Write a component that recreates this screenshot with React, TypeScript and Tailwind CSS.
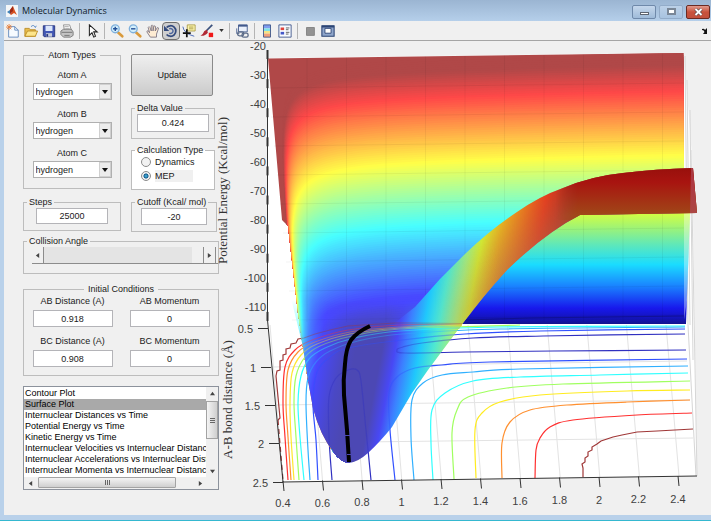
import type { ReactNode } from "react";

type Point = [number, number];

const PLOTS = [
  "Contour Plot",
  "Surface Plot",
  "Internuclear Distances vs Time",
  "Potential Energy vs Time",
  "Kinetic Energy vs Time",
  "Internuclear Velocities vs Internuclear Distance",
  "Internuclear Accelerations vs Internuclear Distance",
  "Internuclear Momenta vs Internuclear Distance",
];

/* ---------- surface geometry ---------- */

function interpolate(table: Point[], v: number): number {
  if (v <= table[0][0]) return table[0][1];
  for (let i = 1; i < table.length; i++) {
    if (v <= table[i][0]) {
      const [a, fa] = table[i - 1];
      const [b, fb] = table[i];
      return fa + ((fb - fa) * (v - a)) / (b - a);
    }
  }
  return table[table.length - 1][1];
}

const WALL_BASE: Point[] = [[58, 266], [140, 275], [222, 283], [313, 295], [370, 304], [463, 335]];
const RED: Point[] = [[54, 176], [60, 176], [86, 255], [150, 255], [212, 72], [320, 72]];
const GREEN: Point[] = [[54, 72], [86, 72], [150, 255], [212, 255], [282, 72], [320, 72]];
const BLUE: Point[] = [[54, 72], [150, 72], [212, 255], [288, 255], [316, 185]];

function wallColor(y: number): string {
  const c = [RED, GREEN, BLUE].map((t) => Math.round(interpolate(t, y)));
  return `rgb(${c[0]},${c[1]},${c[2]})`;
}

function wallBand(level: number): string {
  const pts: string[] = [`690,${level.toFixed(1)}`];
  for (let dy = 1.6; dy < 480 - level; dy *= 1.1) {
    const y = level + dy;
    const x = Math.min(688, interpolate(WALL_BASE, y) + 600 / dy + 6000 / (dy * dy));
    pts.push(`${x.toFixed(1)},${(y + (684 - x) * 0.012).toFixed(1)}`);
  }
  return `M${pts.join("L")}L${interpolate(WALL_BASE, 480) + 2},490L690,490Z`;
}

const LEVELS = Array.from({ length: 125 }, (_, i) => 48 + i * 2.2);

function smooth(points: Point[]): string {
  let d = `M${points[0][0]} ${points[0][1]}`;
  for (let i = 0; i < points.length - 1; i++) {
    const p0 = points[Math.max(0, i - 1)];
    const p1 = points[i];
    const p2 = points[i + 1];
    const p3 = points[Math.min(points.length - 1, i + 2)];
    const c1 = [p1[0] + (p2[0] - p0[0]) / 6, p1[1] + (p2[1] - p0[1]) / 6];
    const c2 = [p2[0] - (p3[0] - p1[0]) / 6, p2[1] - (p3[1] - p1[1]) / 6];
    d += `C${c1[0].toFixed(1)} ${c1[1].toFixed(1)} ${c2[0].toFixed(1)} ${c2[1].toFixed(1)} ${p2[0]} ${p2[1]}`;
  }
  return d;
}

const CONTOURS: { color: string; points: Point[] }[] = [
  { color: "#ff3030", points: [[535, 478], [536, 450], [540, 438], [550, 427], [573, 420], [637, 415], [692, 413]] },
  { color: "#ff9030", points: [[502, 478], [502, 443], [510, 422], [530, 410], [567, 405], [627, 402], [690, 400]] },
  { color: "#ffec20", points: [[476, 478], [475, 430], [482, 413], [500, 402], [540, 395], [627, 391], [690, 390]] },
  { color: "#a0ff60", points: [[454, 479], [452, 433], [457, 410], [468, 397], [507, 388], [563, 384], [690, 381]] },
  { color: "#30ffff", points: [[433, 480], [431, 443], [432, 410], [445, 393], [473, 381], [520, 377], [600, 375], [688, 373]] },
  { color: "#30b0ff", points: [[414, 480], [411, 437], [412, 400], [423, 383], [442, 375], [473, 372], [520, 369], [688, 366]] },
  { color: "#3050ff", points: [[395, 480], [390, 430], [389, 393], [397, 377], [415, 368], [442, 365], [490, 362], [687, 359]] },
  { color: "#3030c0", points: [[685, 334], [543, 336], [473, 338], [422, 343], [403, 347], [397, 350], [405, 353], [465, 352], [553, 351], [686, 350]] },
  { color: "#3030c0", points: [[332, 480], [329, 437], [329, 397], [336, 378], [348, 370], [357, 370], [361, 381], [366, 430], [371, 480]] },
  { color: "#ff3030", points: [[288, 480], [285, 437], [283, 403], [285, 367], [295, 350], [312, 340], [348, 330], [400, 325], [462, 324]] },
  { color: "#ff9030", points: [[291, 480], [288, 437], [286, 403], [288, 370], [298, 352], [315, 342], [350, 332], [400, 327], [462, 325]] },
  { color: "#ffe830", points: [[294, 480], [291, 437], [290, 403], [292, 373], [301, 355], [317, 344], [350, 334], [400, 328], [462, 325]] },
  { color: "#a0ff60", points: [[299, 480], [296, 437], [294, 403], [296, 376], [305, 357], [320, 346], [352, 336], [400, 329], [520, 325]] },
  { color: "#30ffff", points: [[304, 480], [300, 437], [298, 403], [301, 376], [309, 359], [325, 348], [354, 338], [400, 331], [500, 327], [685, 326]] },
  { color: "#30b0ff", points: [[310, 480], [308, 450], [306, 403], [308, 378], [316, 362], [330, 351], [358, 341], [402, 334], [500, 329], [685, 327]] },
  { color: "#3050ff", points: [[318, 480], [316, 440], [313, 403], [317, 372], [330, 357], [348, 348], [402, 340], [465, 334], [540, 331], [685, 329]] },
];

const FUNNEL =
  "M289 290L303 347Q307 378 313 408Q320 435 334 453Q341 462 349 463Q358 462 368 453Q380 442 392 427L412 393L428 370L463 323L490 290Z";
const RAMP =
  "M386 328L392 325L415 307L440 279L465 254Q490 230 517 212Q540 196 563 188Q592 176 623 173Q655 169 693 168L697 213L580 215Q545 233 507 270Q484 295 463 323L459 329Z";

const Z_LABELS = [-20, -30, -40, -50, -60, -70, -80, -90, -100, -110];
const X_LABELS = ["0.4", "0.6", "0.8", "1", "1.2", "1.4", "1.6", "1.8", "2", "2.2", "2.4"];
const Y_TICKS: { label: string; x: number; y: number }[] = [
  { label: "0.5", x: 268, y: 328 },
  { label: "1", x: 271, y: 367 },
  { label: "1.5", x: 275, y: 405 },
  { label: "2", x: 279, y: 443 },
  { label: "2.5", x: 283, y: 482 },
];

function ContourLines() {
  return (
    <g fill="none" strokeWidth="1.200">
      {CONTOURS.map((c, i) => (
        <path key={i} d={smooth(c.points)} stroke={c.color} />
      ))}
      <path
        stroke="#a03838"
        d="M583 477v-9l-1-4l3-2v-4l3-2v-4l4-2v-3l5-3l4-3l6-2l6-2l9-2l15-3l20-1l36-2"
      />
      <path
        stroke="#a03838"
        d="M470 323L395 323L348 326L330 330L315 334L304 338L298 339L296 343L291 344L290 348L286 349L286 354L283 355L283 360L280 361L280 370L277 371L276 376L278 397L280 418L278 420"
      />
      <path stroke="#a03838" strokeDasharray="5 4" d="M278 420L283 480" />
    </g>
  );
}

function SurfacePlot() {
  return (
    <svg viewBox="216 41 495 474" className="block h-auto w-full overflow-visible" fontFamily="'Liberation Sans', Arial, sans-serif">
      <title>Potential energy surface</title>
      <defs>
        <linearGradient id="valley" gradientUnits="userSpaceOnUse" x1="360" y1="0" x2="611" y2="47.7">
          <stop offset="0" stopColor="#48ffff" />
          <stop offset=".045" stopColor="#4890ff" />
          <stop offset=".1" stopColor="#4848ff" />
          <stop offset=".19" stopColor="#4a48c4" />
          <stop offset=".24" stopColor="#4c48b4" />
          <stop offset=".34" stopColor="#4c48b4" />
          <stop offset=".39" stopColor="#4848f4" />
          <stop offset=".43" stopColor="#3c80ff" />
          <stop offset=".485" stopColor="#20c8fc" />
          <stop offset=".54" stopColor="#50e8d0" />
          <stop offset=".6" stopColor="#a0f080" />
          <stop offset=".645" stopColor="#d4f430" />
          <stop offset=".71" stopColor="#ecb81c" />
          <stop offset=".78" stopColor="#f07c18" />
          <stop offset=".86" stopColor="#f03414" />
          <stop offset=".97" stopColor="#a01410" />
          <stop offset="1" stopColor="#a01410" />
        </linearGradient>
        <linearGradient id="shade" gradientUnits="userSpaceOnUse" x1="500" y1="210" x2="535" y2="253">
          <stop offset="0" stopColor="#b07050" stopOpacity="0" />
          <stop offset="1" stopColor="#b06c50" stopOpacity=".6" />
        </linearGradient>
        <linearGradient id="plateau" gradientUnits="userSpaceOnUse" x1="0" y1="168" x2="0" y2="215">
          <stop offset="0" stopColor="#98100c" />
          <stop offset=".3" stopColor="#a81410" />
          <stop offset="1" stopColor="#a04818" />
        </linearGradient>
        <linearGradient id="plateauFade" gradientUnits="userSpaceOnUse" x1="556" y1="0" x2="578" y2="0">
          <stop offset="0" stopColor="#000" />
          <stop offset="1" stopColor="#fff" />
        </linearGradient>
        <linearGradient id="shadeFade" gradientUnits="userSpaceOnUse" x1="435" y1="0" x2="500" y2="0">
          <stop offset="0" stopColor="#000" />
          <stop offset="1" stopColor="#fff" />
        </linearGradient>
        <linearGradient id="backWall" gradientUnits="userSpaceOnUse" x1="0" y1="213" x2="0" y2="325">
          <stop offset="0" stopColor="#d4ff40" />
          <stop offset=".12" stopColor="#a4f470" />
          <stop offset=".28" stopColor="#60e8b8" />
          <stop offset=".46" stopColor="#1adcff" />
          <stop offset=".65" stopColor="#1a84ff" />
          <stop offset=".85" stopColor="#1818ec" />
          <stop offset=".93" stopColor="#1414c0" />
          <stop offset="1" stopColor="#121288" />
        </linearGradient>
        <linearGradient id="fade" gradientUnits="userSpaceOnUse" x1="0" y1="300" x2="0" y2="350">
          <stop offset="0" stopColor="#000" />
          <stop offset="1" stopColor="#fff" />
        </linearGradient>
        <mask id="funnelMask" maskUnits="userSpaceOnUse" x="216" y="41" width="495" height="474">
          <rect x="216" y="41" width="495" height="474" fill="url(#fade)" />
          <path d="M384 326H500V480H384Z" fill="#fff" />
        </mask>
        <mask id="plateauMask" maskUnits="userSpaceOnUse" x="216" y="41" width="495" height="474">
          <rect x="216" y="41" width="495" height="474" fill="url(#plateauFade)" />
        </mask>
        <mask id="shadeMask" maskUnits="userSpaceOnUse" x="216" y="41" width="495" height="474">
          <rect x="216" y="41" width="495" height="474" fill="url(#shadeFade)" />
        </mask>
        <clipPath id="wallClip">
          <path d="M268 58.500L683.500 53V324H450L392 326L380 400L349 463Q341 462 334 453Q320 435 313 408Q307 378 303 347L298 313L288 226L282 220Z" />
        </clipPath>
        <clipPath id="funnelClip">
          <path d="M298 320L303 347Q307 378 313 408Q320 435 334 453Q341 462 349 463Q358 462 368 453Q380 442 392 427L412 393L428 370L463 323Z" />
        </clipPath>
        <clipPath id="rampClip">
          <path d={RAMP} />
        </clipPath>
      </defs>

      <path d="M268 58L684 53L692 157L697 476L283 482L268 322Z" fill="#fff" />

      <g stroke="#e3e3e3" fill="none">
        {X_LABELS.map((_, i) => (
          <path key={i} d={`M${270 + i * 39.6} 325L${283 + i * 39.6} ${482 - i * 0.6}`} />
        ))}
        <path d="M271 367L687 361M275 405L690 400M279 443L693 438" />
        <path d="M685 56L688 325L696 476M687 80L690 325M690 110L693 360M691 150L697 476" stroke="#d6d6d6" />
      </g>

      <ContourLines />

      <path d="M450 324L463 290L580 200L684 200L690 213L686 324Z" fill="url(#backWall)" />
      <path d="M684 213H690L687 300L684 320Z" fill="#fff" fillOpacity=".35" />

      <g clipPath="url(#wallClip)">
        <rect x="262" y="50" width="425" height="420" fill="#b04848" />
        {LEVELS.map((level) => (
          <path key={level} d={wallBand(level)} fill={wallColor(level)} />
        ))}
      </g>
      <path d="M463 323Q484 295 507 270Q545 233 580 215L684 213V324H462Z" fill="url(#backWall)" />
      <path d="M465 320L530 318L684 316" stroke="#101080" strokeOpacity=".7" fill="none" />

      <g stroke="#000" strokeOpacity=".05" fill="none">
        {X_LABELS.slice(1).map((_, i) => (
          <path key={i} d={`M${307 + i * 39.5} ${58 - i * 0.5}V322`} />
        ))}
        {Z_LABELS.slice(1).map((_, i) => (
          <path key={i} d={`M${268 + i * 3} ${88 + i * 29}L684 ${83 + i * 29}`} />
        ))}
      </g>

      <g mask="url(#funnelMask)">
        <path d={FUNNEL} fill="url(#valley)" />
      </g>
      <path d={RAMP} fill="url(#valley)" />
      <path d={RAMP} fill="url(#shade)" mask="url(#shadeMask)" />
      <g clipPath="url(#rampClip)">
        <rect x="550" y="160" width="150" height="60" fill="url(#plateau)" mask="url(#plateauMask)" />
        <path d="M691 168H693L697 213H690Z" fill="#b04858" fillOpacity=".7" />
      </g>

      <g clipPath="url(#funnelClip)" opacity=".4">
        <ContourLines />
      </g>
      <path
        d="M370 326Q357 332 351 340Q346 348 345 364Q343 380 344 395L347 430L349 462"
        fill="none"
        stroke="#000"
        strokeWidth="4"
      />
      <path d="M345 435.500H350M347 454.500H351" stroke="#4c48b4" />

      <g stroke="#333" fill="none">
        <path d="M267.500 50V320L283 482L697 476" />
        {Z_LABELS.map((_, i) => (
          <path key={i} d={`M267.500 ${50 + i * 29.100}v9`} strokeWidth="2" />
        ))}
        {Y_TICKS.map((t) => (
          <path key={t.label} d={`M${t.x - 10} ${t.y + 0.5}H${t.x}`} />
        ))}
        {X_LABELS.map((label, i) => (
          <path key={label} d={`M${283 + i * 39.5} ${481 - i * 0.5}l1 10`} />
        ))}
      </g>

      <g fill="#404040" fontSize="11">
        {Z_LABELS.map((v, i) => (
          <text key={v} x="266" y={50 + i * 29} textAnchor="end">{v}</text>
        ))}
        {Y_TICKS.map((t) => (
          <text key={t.label} x={t.x - 15} y={t.y + 5} textAnchor="end">{t.label}</text>
        ))}
        {X_LABELS.map((label, i) => (
          <text key={label} x={283 + i * 39.5} y={507 - Math.round(i * 0.4)} textAnchor="middle">{label}</text>
        ))}
      </g>
      <g fill="#333" fontFamily="'Liberation Serif', 'Times New Roman', serif" fontSize="13">
        <text transform="translate(227 264) rotate(-90)">Potential Energy (Kcal/mol)</text>
        <text transform="translate(232 459) rotate(-90)">A-B bond distance (Å)</text>
      </g>
    </svg>
  );
}

/* ---------- toolbar ---------- */

function Tool({ label, pressed, children }: { label: string; pressed?: boolean; children: ReactNode }) {
  return (
    <button
      type="button"
      aria-label={label}
      className={
        pressed
          ? "flex h-[18px] w-[18px] items-center justify-center rounded-sm border border-[#6f6f6f] bg-[#cfcfcf]"
          : "flex h-[18px] w-[18px] items-center justify-center"
      }
    >
      <svg viewBox="0 0 16 16" className="h-[14px] w-[14px] shrink-0" fill="none" aria-hidden="true">
        {children}
      </svg>
    </button>
  );
}

function Separator() {
  return <span className="mx-[3px] h-4 w-px bg-[#b4b4b4]" />;
}

function Magnifier({ plus }: { plus?: boolean }) {
  return (
    <>
      <path d="M9 9.500l5 4.500" stroke="#d99a3c" strokeWidth="3" strokeLinecap="round" />
      <circle cx="6" cy="5.500" r="4.500" fill="#d3eefb" stroke="#7fb0dc" strokeWidth="1.500" />
      <path d={plus ? "M3.500 5.500h5M6 3v5" : "M3.500 5.500h5"} stroke="#234f96" strokeWidth="1.600" />
    </>
  );
}

function Toolbar() {
  return (
    <div role="toolbar" className="flex h-5 items-center border-b border-[#a5a5a5] bg-[#f0f0f0]">
      <Tool label="New Figure">
        <path d="M3 3h7l4 4v8H3z" fill="#f6fbff" stroke="#5e86bb" />
        <path d="M10 3v4h4" stroke="#5e86bb" />
        <path d="M1 1l5 5M6 1L1 6M3.500 0v7M0 3.500h7" stroke="#e9803c" />
      </Tool>
      <Tool label="Open File">
        <path d="M1 14V5h5l1 1.500h6V14z" fill="#e8bd4c" stroke="#b98a22" />
        <path d="M1 14l3-6h11.500L13 14z" fill="#fde58a" stroke="#b98a22" />
        <path d="M8 3q3-3 5 1l1-2" stroke="#4c7fbf" />
      </Tool>
      <Tool label="Save Figure">
        <path d="M1.500 2h13v12.500h-12l-1-1z" fill="#4257b4" stroke="#26347c" />
        <path d="M4 2h8v6H4z" fill="#dbe6fb" />
        <path d="M4.500 10.500h7v4h-7z" fill="#c6ccdb" />
        <path d="M6 11.500v3" stroke="#26347c" strokeWidth="2" />
      </Tool>
      <Tool label="Print Figure">
        <path d="M5 7L4 1h7l2 6" fill="#fff" stroke="#8b8b8b" />
        <path d="M1 8l3-2h9l2 3v4l-3 2H4l-3-3z" fill="#c4c4c4" stroke="#777" />
        <path d="M2 9.500h12M5 13h6" stroke="#6e6e6e" />
        <path d="M5 3h5M6 5h5" stroke="#a6a6a6" />
      </Tool>
      <Separator />
      <Tool label="Edit Plot">
        <path d="M5 1v12l3-3 2 5 2-1-2-5h4z" fill="#fff" stroke="#222" strokeWidth="1.200" />
      </Tool>
      <Separator />
      <Tool label="Zoom In"><Magnifier plus /></Tool>
      <Tool label="Zoom Out"><Magnifier /></Tool>
      <Tool label="Pan">
        <path
          d="M5 15L1 9q0-2 2-1l1 2L2.500 4q1-2 2 0L6 8V2q1-2 2 0v6l1-5.500q1.500-1 2 .5L10.500 8 13 4q2 0 1 2l-2 5.500V15z"
          fill="#fdebd3"
          stroke="#7b7482"
        />
      </Tool>
      <Tool label="Rotate 3D" pressed>
        <path d="M3 12a6 6 0 1 0 0-8" stroke="#334a7d" strokeWidth="2" />
        <path d="M0 2v6h6z" fill="#334a7d" />
        <path d="M6 10.500a3 2.800 0 1 0 0-5" stroke="#4b659e" strokeWidth="1.600" />
      </Tool>
      <Tool label="Data Cursor">
        <path d="M6 1h9v7H6z" fill="#fbf3ac" stroke="#a99b49" />
        <path d="M8 3.500h5M8 5.500h5" stroke="#a99b49" />
        <path d="M1 3q1 8 13 11" stroke="#3d5fb5" />
        <path d="M1 10.500h9M5.500 6v9" stroke="#111" strokeWidth="2" />
      </Tool>
      <Tool label="Brush">
        <path d="M14 1L7 8" stroke="#3c527d" strokeWidth="2" />
        <path d="M8 6.500L5 8q-1 3-4.500 5.500Q6 14 9 10z" fill="#b02a35" />
        <path d="M10 10h5v5h-5z" fill="#f01818" />
      </Tool>
      <button type="button" aria-label="Brush colours" className="flex h-[18px] w-[10px] items-center justify-center">
        <svg viewBox="0 0 6 4" className="h-[3px] w-[5px]" aria-hidden="true"><path d="M0 0h6L3 4z" fill="#333" /></svg>
      </button>
      <Separator />
      <Tool label="Link Plot">
        <path d="M4 1h10v8H4z" fill="#e9effa" stroke="#41598c" />
        <path d="M4 2h10" stroke="#41598c" strokeWidth="2" />
        <path d="M2 5v6h3" stroke="#41598c" />
        <rect x="3" y="9" width="7" height="4.500" rx="2" stroke="#5b6b88" strokeWidth="1.500" />
        <rect x="8" y="10.500" width="7" height="4.500" rx="2" stroke="#5b6b88" strokeWidth="1.500" />
      </Tool>
      <Separator />
      <Tool label="Insert Colorbar">
        <path d="M4 1h8v4H4z" fill="#7f9df0" />
        <path d="M4 5h8v3H4z" fill="#7fe3e8" />
        <path d="M4 8h8v3H4z" fill="#f4e486" />
        <path d="M4 11h8v4H4z" fill="#f2a07a" />
        <path d="M4 1h8v14H4z" stroke="#3a5489" />
      </Tool>
      <Tool label="Insert Legend">
        <path d="M1 1h14v14H1z" fill="#f8fbff" stroke="#3a5489" />
        <path d="M3 4h4v3H3z" fill="#e0433a" />
        <path d="M3 9h4v3H3z" fill="#4357c8" />
        <path d="M9 4.500h4M9 6.500h3M9 9.500h4M9 11.500h3" stroke="#555" />
      </Tool>
      <Separator />
      <Tool label="Hide Plot Tools">
        <path d="M4 4h9v9H4z" fill="#939393" stroke="#808080" />
      </Tool>
      <Tool label="Show Plot Tools">
        <path d="M1 2h14v12H1z" fill="#8fa6cb" stroke="#2b4474" strokeWidth="1.200" />
        <path d="M1 3h14" stroke="#2b4474" strokeWidth="2" />
        <path d="M4.500 5h7v5.500h-7z" fill="#fff" stroke="#2b4474" />
      </Tool>
      <button type="button" aria-label="Dock Figure" className="ml-auto flex h-[18px] w-[13px] items-center justify-center">
        <svg viewBox="0 0 6 6" className="h-[6px] w-[6px]" aria-hidden="true">
          <path d="M0 1q2-1 3 1l2-2v6H1l1.500-2Q2 2 0 2z" fill="#111" />
        </svg>
      </button>
    </div>
  );
}

function TitleBar() {
  return (
    <header className="flex h-[21px] items-center gap-1 bg-linear-to-b from-[#9bb5d2] to-[#b5cfea] pr-px pl-[6px]">
      <svg viewBox="0 0 12 12" className="h-3 w-3" aria-hidden="true">
        <path d="M0 0h12v12H0z" fill="#f4f6f8" />
        <path d="M1 7l3-2 2 2-2 2z" fill="#3f7fb5" />
        <path d="M4 5l3-4 2 5 2 4-3-2-3 2-1-1 2-2z" fill="#d8501f" />
        <path d="M4 5l3-4v5L4 9z" fill="#9c2b18" />
      </svg>
      <h1 className="font-['Open_Sans','Noto_Sans',sans-serif] text-[9px] leading-4 text-[#101c2a]">Molecular Dynamics</h1>
      <div className="ml-auto flex gap-[3px] pt-[2px]">
        <button type="button" aria-label="Minimize" className="flex h-[14px] w-6 items-center justify-center rounded-[2px] border border-[#6f89aa] bg-linear-to-b from-[#c5d7ec] to-[#9fbbd9] pt-[3px]">
          <span className="h-[3px] w-[9px] border border-[#5d6470] bg-white" />
        </button>
        <button type="button" aria-label="Maximize" className="flex h-[14px] w-6 items-center justify-center rounded-[2px] border border-[#93acc9] bg-linear-to-b from-[#bcd1e8] to-[#a8c3e0]">
          <span className="h-[7px] w-[9px] border-2 border-[#7a8797] bg-white" />
        </button>
        <button type="button" aria-label="Close" className="flex h-[14px] w-6 items-center justify-center rounded-[2px] border border-[#6b2a22] bg-linear-to-b from-[#e0998c] via-[#c9523c] to-[#c2503c]">
          <svg viewBox="0 0 9 8" className="h-2 w-[9px]" aria-hidden="true">
            <path d="M1.500 1l6 6M7.500 1l-6 6" stroke="#5c4a4c" strokeWidth="3.200" />
            <path d="M1.500 1l6 6M7.500 1l-6 6" stroke="#fff" strokeWidth="1.800" />
          </svg>
        </button>
      </div>
    </header>
  );
}

/* ---------- controls ---------- */

function Panel({ title, className, center, children }: { title: string; className: string; center?: boolean; children: ReactNode }) {
  return (
    <fieldset className={`min-w-0 border border-[#bdbdbd] ${className}`}>
      <legend className={center ? "mx-auto px-1 leading-3" : "ml-[3px] px-[2px] leading-3"}>{title}</legend>
      {children}
    </fieldset>
  );
}

function AtomSelect({ id, label }: { id: string; label: string }) {
  return (
    <div className="flex flex-col items-center gap-[2px]">
      <label htmlFor={id}>{label}</label>
      <span className="relative block w-[79px]">
        <select id={id} className="block h-[17px] w-full appearance-none border border-[#b0b0b0] bg-white pl-[2px] text-[9px] leading-3">
          <option>hydrogen</option>
        </select>
        <span className="pointer-events-none absolute top-px right-px flex h-[15px] w-3 items-center justify-center border border-[#d0d0d0] bg-[#ececec]">
          <svg viewBox="0 0 6 4" className="h-1 w-[6px]" aria-hidden="true"><path d="M0 0h6L3 4z" fill="#111" /></svg>
        </span>
      </span>
    </div>
  );
}

const FIELD = "block border border-[#b4b4b8] bg-white p-0 text-center text-[9px] leading-3";

function Condition({ id, label, value }: { id: string; label: string; value: string }) {
  return (
    <div className="flex flex-col items-center gap-[3px]">
      <label htmlFor={id}>{label}</label>
      <input id={id} defaultValue={value} className={`${FIELD} h-[17px] w-20`} />
    </div>
  );
}

const SCROLL_BUTTON = "flex h-3 w-3 shrink-0 items-center justify-center";

function Triangle({ d }: { d: string }) {
  return (
    <svg viewBox="0 0 6 6" className="h-[5px] w-[5px]" aria-hidden="true">
      <path d={d} fill="#444" />
    </svg>
  );
}

function PlotList() {
  return (
    <div className="mt-[10px] w-full border border-[#8c929c] bg-white">
      <div className="flex">
        <select
          size={8}
          aria-label="Plot type"
          defaultValue="Surface Plot"
          className="h-[90px] min-w-0 flex-1 appearance-none overflow-hidden bg-none pt-px text-[9px]"
        >
          {PLOTS.map((p) => (
            <option
              key={p}
              value={p}
              className="h-[11px] min-h-[11px] overflow-hidden p-0 pl-px leading-[11px] text-black checked:bg-[linear-gradient(#a9a9a9,#a9a9a9)]"
            >
              {p}
            </option>
          ))}
        </select>
        <div className="flex w-3 flex-col bg-[#f0f0f0]">
          <button type="button" aria-label="Scroll up" className={SCROLL_BUTTON}><Triangle d="M0 5l3-4 3 4z" /></button>
          <div className="mt-[2px] flex h-[38px] flex-col items-center justify-center gap-px border border-[#a3a3a3] bg-linear-to-r from-[#f4f4f4] to-[#cfcfcf]">
            <span className="h-px w-[5px] bg-[#666]" />
            <span className="h-px w-[5px] bg-[#666]" />
            <span className="h-px w-[5px] bg-[#666]" />
          </div>
          <button type="button" aria-label="Scroll down" className={`${SCROLL_BUTTON} mt-auto`}><Triangle d="M0 1h6L3 5z" /></button>
        </div>
      </div>
      <div className="flex h-3 bg-[#f0f0f0] pr-3">
        <button type="button" aria-label="Scroll left" className={SCROLL_BUTTON}><Triangle d="M5 0v6L1 3z" /></button>
        <div className="ml-[2px] flex h-[11px] w-[138px] items-center justify-center gap-px rounded-[1px] border border-[#a3a3a3] bg-linear-to-b from-[#f4f4f4] to-[#cfcfcf]">
          <span className="h-[5px] w-px bg-[#666]" />
          <span className="h-[5px] w-px bg-[#666]" />
          <span className="h-[5px] w-px bg-[#666]" />
        </div>
        <button type="button" aria-label="Scroll right" className={`${SCROLL_BUTTON} ml-auto`}><Triangle d="M1 0v6l4-3z" /></button>
      </div>
    </div>
  );
}

function Controls() {
  return (
    <form className="w-[196px] shrink-0 leading-3">
      <div className="flex gap-[10px]">
        <div className="flex w-[98px] flex-col">
          <Panel title="Atom Types" center className="flex h-[140px] flex-col">
            <div className="flex flex-col gap-2 pt-2">
              <AtomSelect id="atom-a" label="Atom A" />
              <AtomSelect id="atom-b" label="Atom B" />
              <AtomSelect id="atom-c" label="Atom C" />
            </div>
          </Panel>
          <Panel title="Steps" className="mt-[7px] h-[35px]">
            <input aria-label="Steps" defaultValue="25000" className={`${FIELD} mx-auto h-4 w-[72px]`} />
          </Panel>
        </div>
        <div className="flex flex-1 flex-col pt-[5px]">
          <button type="button" className="h-[42px] w-[82px] rounded-[2px] border border-[#8a8a8a] bg-linear-to-b from-[#efefef] via-[#dedede] to-[#cbcbcb]">
            Update
          </button>
          <Panel title="Delta Value" className="mt-[6px] h-[37px] w-[84px]">
            <input aria-label="Delta Value" defaultValue="0.424" className={`${FIELD} mx-auto h-[18px] w-[72px]`} />
          </Panel>
          <Panel title="Calculation Type" className="mt-[5px] h-[46px] w-[84px] bg-white">
            <div className="flex flex-col gap-[2px] pl-[9px]">
              {["Dynamics", "MEP"].map((mode) => (
                <label key={mode} className="flex items-center gap-1">
                  <input
                    type="radio"
                    name="calculation"
                    value={mode}
                    defaultChecked={mode === "MEP"}
                    className="h-[10px] w-[10px] appearance-none rounded-full border border-[#8c8c8c] bg-[#f2f2f2] checked:bg-[radial-gradient(circle,#48c0e8_0,#1c5f90_38%,#f2f2f2_52%)]"
                  />
                  <span className={mode === "MEP" ? "w-[38px] bg-[#f0f0f0]" : ""}>{mode}</span>
                </label>
              ))}
            </div>
          </Panel>
          <Panel title="Cutoff (Kcal/ mol)" className="mt-[6px] h-9 w-[86px]">
            <input aria-label="Cutoff (Kcal/ mol)" defaultValue="-20" className={`${FIELD} mx-auto h-[17px] w-[66px]`} />
          </Panel>
        </div>
      </div>
      <Panel title="Collision Angle" className="mt-[3px] h-[39px] w-full">
        <div className="ml-2 flex h-[17px] border-b border-[#8c8c8c]">
          <button type="button" aria-label="Decrease angle" className="flex w-3 items-center justify-center border-r border-[#8c8c8c]"><Triangle d="M5 0v6L1 3z" /></button>
          <input
            type="range"
            aria-label="Collision Angle"
            min={0}
            max={180}
            defaultValue={180}
            className="h-4 min-w-0 flex-1 appearance-none bg-[#e4e4e4] [&::-webkit-slider-thumb]:h-4 [&::-webkit-slider-thumb]:w-3 [&::-webkit-slider-thumb]:appearance-none [&::-webkit-slider-thumb]:border-r [&::-webkit-slider-thumb]:border-[#8c8c8c] [&::-webkit-slider-thumb]:bg-[#f0f0f0]"
          />
          <button type="button" aria-label="Increase angle" className="mr-[2px] flex w-3 items-center justify-center border-r border-[#8c8c8c]"><Triangle d="M1 0v6l4-3z" /></button>
        </div>
      </Panel>
      <Panel title="Initial Conditions" center className="mt-[9px] h-[93px] w-full">
        <div className="grid grid-cols-2 gap-y-2">
          <Condition id="ab-distance" label="AB Distance (A)" value="0.918" />
          <Condition id="ab-momentum" label="AB Momentum" value="0" />
          <Condition id="bc-distance" label="BC Distance (A)" value="0.908" />
          <Condition id="bc-momentum" label="BC Momentum" value="0" />
        </div>
      </Panel>
      <PlotList />
    </form>
  );
}

export default function App() {
  return (
    <div className="bg-white font-['Liberation_Sans',Arial,sans-serif] text-[9px] text-[#1a1a1a]">
      <div className="border-b border-[#35b8d0] bg-[#b9d1ea]">
        <TitleBar />
        <div className="mb-[5px] ml-1 bg-[#f0f0f0]">
          <Toolbar />
          <main className="flex items-start pl-[19px]">
            <div className="pt-2">
              <Controls />
            </div>
            <div className="-ml-[3px] min-w-0 flex-1">
              <SurfacePlot />
            </div>
          </main>
        </div>
      </div>
    </div>
  );
}
